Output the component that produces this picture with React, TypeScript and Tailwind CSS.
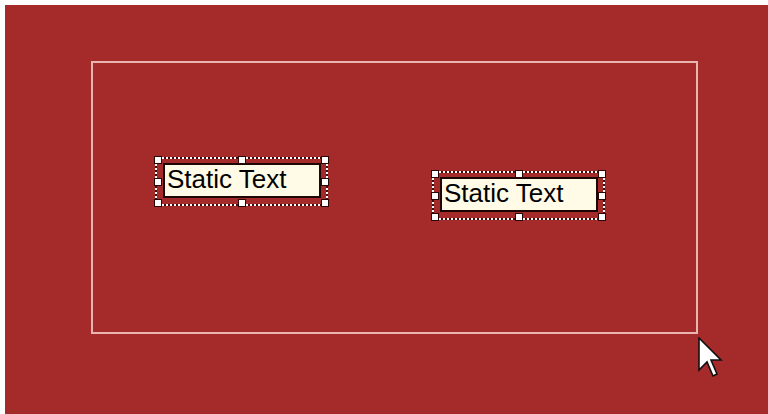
import React from 'react';

const HANDLE_SPOTS = [
  'left-[-3px] top-[-3px]',
  'left-[calc(50%-4px)] top-[-3px]',
  'right-[-3px] top-[-3px]',
  'left-[-3px] top-[calc(50%-4px)]',
  'right-[-3px] top-[calc(50%-4px)]',
  'left-[-3px] bottom-[-3px]',
  'left-[calc(50%-4px)] bottom-[-3px]',
  'right-[-3px] bottom-[-3px]',
];

// A selected "Static Text" control as the dialog editor draws it:
// dotted selection frame, eight grab handles, ivory label inside.
function StaticText({ className }: { className: string }) {
  return (
    <div className={`absolute w-[173px] h-[49px] border-2 border-dotted border-white bg-[#3a0c0c] ${className}`}>
      <div className="h-full w-full bg-[#a52a2a] pl-[6px] pt-[4px]">
        <div className="w-[158px] h-[35px] border-2 border-[#1c0606] bg-[#fffbe6] pl-[2px] text-[26px] leading-[28px] text-black font-['Liberation_Sans',Arial,sans-serif] whitespace-nowrap">
          Static Text
        </div>
      </div>
      {HANDLE_SPOTS.map((spot) => (
        <span key={spot} className={`absolute w-[8px] h-[8px] bg-white border border-[#2a0606] ${spot}`} />
      ))}
    </div>
  );
}

function Cursor() {
  return (
    <svg className="absolute left-[693px] top-[332px]" width="26" height="42" viewBox="0 0 13 21">
      <path d="M0.5 0.5 L0.5 16.5 L4.5 12.5 L7.5 19.5 L9.5 18.5 L6.5 11.5 L11.5 11.5 Z" fill="#fff" stroke="#111" strokeWidth="0.8" strokeLinejoin="miter" />
    </svg>
  );
}

export default function App() {
  return (
    <div className="w-[768px] h-[414px] bg-white pl-[5px] pt-[5px] flex">
      <div className="relative flex-1 bg-[#a52a2a]">
        <div className="relative ml-[86px] mt-[56px] w-[607px] h-[273px] border-2 border-[#e9b5b0]">
          <StaticText className="left-[62px] top-[94px]" />
          <StaticText className="left-[339px] top-[108px]" />
        </div>
        <Cursor />
      </div>
    </div>
  );
}
